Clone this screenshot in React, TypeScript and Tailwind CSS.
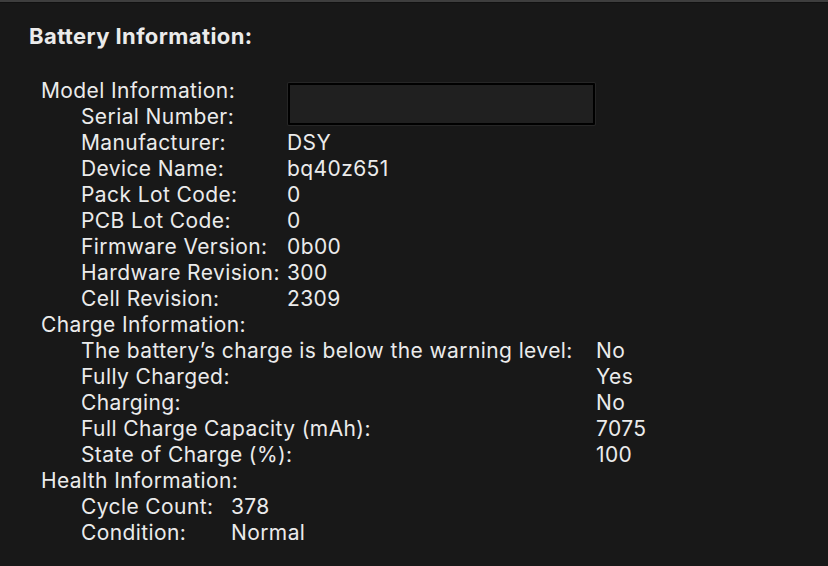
import React from "react";

type Row = [string, string];

const model: Row[] = [
  ["Serial Number:", ""],
  ["Manufacturer:", "DSY"],
  ["Device Name:", "bq40z651"],
  ["Pack Lot Code:", "0"],
  ["PCB Lot Code:", "0"],
  ["Firmware Version:", "0b00"],
  ["Hardware Revision:", "300"],
  ["Cell Revision:", "2309"],
];

const charge: Row[] = [
  ["The battery\u2019s charge is below the warning level:", "No"],
  ["Fully Charged:", "Yes"],
  ["Charging:", "No"],
  ["Full Charge Capacity (mAh):", "7075"],
  ["State of Charge (%):", "100"],
];

const health: Row[] = [
  ["Cycle Count:", "378"],
  ["Condition:", "Normal"],
];

const Group: React.FC<{ rows: Row[]; labelW: string }> = ({ rows, labelW }) => (
  <div className="pl-10">
    {rows.map(([k, v]) => (
      <div key={k} className="flex h-[26px] items-center">
        <span className={`${labelW} shrink-0 whitespace-nowrap`}>{k}</span>
        <span>{v}</span>
      </div>
    ))}
  </div>
);

const App: React.FC = () => {
  return (
    <div
      className="w-[828px] h-[566px] overflow-hidden bg-[#181818] text-[#ebebeb]"
      style={{ fontFamily: "Inter, 'Noto Sans', sans-serif" }}
    >
      <div className="h-[2px] bg-[#3e3e3e]" />
      <div className="h-[1px] bg-[#111111]" />
      <div className="px-[29px] pt-[21px]">
        <h1 className="text-[22px] font-bold leading-6 tracking-[0.4px]">Battery Information:</h1>
        <div className="relative mt-[30px] pl-3 text-[21px] leading-[26px] tracking-[0.4px]">
          <div className="absolute left-[259px] top-[5px] h-[42px] w-[307px] rounded-[1px] border-2 border-black bg-[#202020] shadow-[0_0_0_1px_#262626]" />
          <div className="h-[26px] flex items-center">Model Information:</div>
          <Group rows={model} labelW="w-[206px]" />
          <div className="h-[26px] flex items-center">Charge Information:</div>
          <Group rows={charge} labelW="w-[515px]" />
          <div className="h-[26px] flex items-center">Health Information:</div>
          <Group rows={health} labelW="w-[150px]" />
        </div>
      </div>
    </div>
  );
};

export default App;
